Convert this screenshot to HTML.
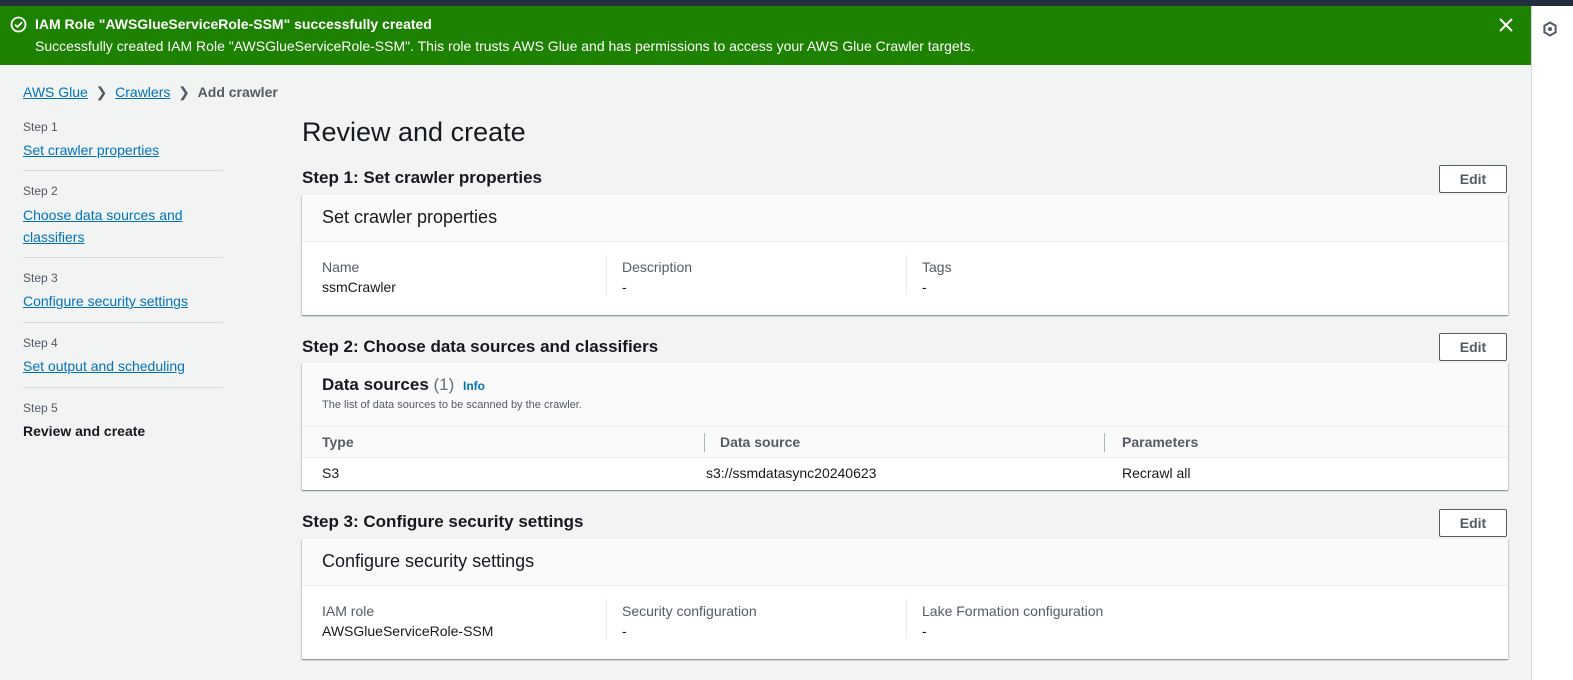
<!DOCTYPE html>
<html><head><meta charset="utf-8"><style>
*{box-sizing:border-box;margin:0;padding:0}
body{width:1573px;height:680px;overflow:hidden;font-family:"Liberation Sans",sans-serif;background:#f2f3f3;color:#16191f;position:relative;font-size:14px}
.top{position:absolute;left:0;top:0;width:1573px;height:6px;background:#232f3e}
.right{position:absolute;left:1531px;top:6px;width:42px;height:674px;background:#fff;border-left:1px solid #d5dbdb}
.banner{position:absolute;left:0;top:6px;width:1531px;height:59px;background:#1d8102;color:#fff}
.banner .t{position:absolute;left:35px;top:10px;font-weight:bold;font-size:14px}
.banner .d{position:absolute;left:35px;top:32px;font-size:14px}
.a{color:#0073bb;text-decoration:underline}
.abs{position:absolute}
.crumb{left:23px;top:84px;font-size:14px;color:#545b64}
.nav{left:23px;width:200px}
.nav .s{font-size:12px;color:#545b64}
.nav .l{font-size:14px;margin-top:6px;line-height:21px}
.sep{position:absolute;left:23px;width:200px;border-top:1px solid #d5dbdb}
h1{position:absolute;left:302px;top:117px;font-size:27px;font-weight:normal}
h2{position:absolute;left:302px;font-size:17px;font-weight:bold}
.edit{position:absolute;left:1439px;width:68px;height:28px;border:1px solid #545b64;border-radius:2px;background:#fff;font-weight:bold;color:#545b64;text-align:center;line-height:26px;font-size:14px}
.card{position:absolute;left:302px;width:1206px;background:#fff;box-shadow:0 1px 1px rgba(0,28,36,.3),1px 1px 1px rgba(0,28,36,.15),-1px 1px 1px rgba(0,28,36,.15)}
.hd{background:#fafafa;border-bottom:1px solid #eaeded;height:47px;padding:12px 20px;font-size:18px}
.col{position:absolute;top:0;font-size:14px}
.col .k{color:#545b64}
.vl{position:absolute;width:1px;background:#eaeded}
</style></head><body>
<div class="top"></div>
<div class="banner">
<svg class="abs" style="left:10px;top:10px" width="17" height="17" viewBox="0 0 17 17"><circle cx="8.5" cy="8.5" r="7" fill="none" stroke="#fff" stroke-width="1.8"/><path d="M5 8.7l2.4 2.3 4.6-4.7" fill="none" stroke="#fff" stroke-width="1.8"/></svg>
<div class="t">IAM Role "AWSGlueServiceRole-SSM" successfully created</div>
<div class="d">Successfully created IAM Role "AWSGlueServiceRole-SSM". This role trusts AWS Glue and has permissions to access your AWS Glue Crawler targets.</div>
<svg class="abs" style="left:1498px;top:11px" width="16" height="16" viewBox="0 0 16 16"><path d="M2 2l12 12M14 2L2 14" stroke="#fff" stroke-width="2"/></svg>
</div>
<div class="right"><svg class="abs" style="left:10px;top:15px" width="16" height="16" viewBox="0 0 16 16"><path d="M8 1.5l5.6 3.2v6.6L8 14.5 2.4 11.3V4.7z" fill="none" stroke="#545b64" stroke-width="2"/><circle cx="8" cy="8" r="2" fill="#545b64"/></svg></div>

<div class="abs crumb"><span class="a">AWS Glue</span> &nbsp;<b style="font-weight:normal">&#x276F;</b>&nbsp; <span class="a">Crawlers</span> &nbsp;&#x276F;&nbsp; <b>Add crawler</b></div>

<div class="abs nav" style="top:120px"><div class="s">Step 1</div><div class="l a">Set crawler properties</div></div>
<div class="sep" style="top:170px"></div>
<div class="abs nav" style="top:184px"><div class="s">Step 2</div><div class="l a" style="line-height:22px">Choose data sources and<br>classifiers</div></div>
<div class="sep" style="top:257px"></div>
<div class="abs nav" style="top:271px"><div class="s">Step 3</div><div class="l a">Configure security settings</div></div>
<div class="sep" style="top:322px"></div>
<div class="abs nav" style="top:336px"><div class="s">Step 4</div><div class="l a">Set output and scheduling</div></div>
<div class="sep" style="top:387px"></div>
<div class="abs nav" style="top:401px"><div class="s">Step 5</div><div class="l" style="font-weight:bold">Review and create</div></div>

<h1>Review and create</h1>

<h2 style="top:168px">Step 1: Set crawler properties</h2>
<div class="edit" style="top:165px">Edit</div>
<div class="card" style="top:195px;height:120px">
<div class="hd">Set crawler properties</div>
<div class="col" style="left:20px;top:64px"><div class="k">Name</div><div style="margin-top:4px">ssmCrawler</div></div>
<div class="vl" style="left:304px;top:60px;height:40px"></div>
<div class="col" style="left:320px;top:64px"><div class="k">Description</div><div style="margin-top:4px">-</div></div>
<div class="vl" style="left:604px;top:60px;height:40px"></div>
<div class="col" style="left:620px;top:64px"><div class="k">Tags</div><div style="margin-top:4px">-</div></div>
</div>

<h2 style="top:337px">Step 2: Choose data sources and classifiers</h2>
<div class="edit" style="top:333px">Edit</div>
<div class="card" style="top:363px;height:127px">
<div style="background:#fafafa;height:64px;border-bottom:1px solid #eaeded;padding:12px 20px">
<div style="font-size:17px;font-weight:bold">Data sources <span style="font-weight:normal;color:#687078">(1)</span> <span style="font-size:12px;color:#0073bb;margin-left:4px">Info</span></div>
<div style="font-size:11px;color:#545b64;margin-top:4px">The list of data sources to be scanned by the crawler.</div></div>
<div style="height:31px;border-bottom:1px solid #eaeded;position:relative;background:#fafafa;font-weight:bold;color:#545b64">
<div class="col" style="left:20px;top:7px">Type</div>
<div class="vl" style="left:402px;top:6px;height:19px;background:#aab7b8"></div>
<div class="col" style="left:418px;top:7px">Data source</div>
<div class="vl" style="left:802px;top:6px;height:19px;background:#aab7b8"></div>
<div class="col" style="left:820px;top:7px">Parameters</div></div>
<div style="position:relative">
<div class="col" style="left:20px;top:7px">S3</div>
<div class="col" style="left:404px;top:7px">s3://ssmdatasync20240623</div>
<div class="col" style="left:820px;top:7px">Recrawl all</div></div>
</div>

<h2 style="top:512px">Step 3: Configure security settings</h2>
<div class="edit" style="top:509px">Edit</div>
<div class="card" style="top:539px;height:120px">
<div class="hd">Configure security settings</div>
<div class="col" style="left:20px;top:64px"><div class="k">IAM role</div><div style="margin-top:4px">AWSGlueServiceRole-SSM</div></div>
<div class="vl" style="left:304px;top:60px;height:40px"></div>
<div class="col" style="left:320px;top:64px"><div class="k">Security configuration</div><div style="margin-top:4px">-</div></div>
<div class="vl" style="left:604px;top:60px;height:40px"></div>
<div class="col" style="left:620px;top:64px"><div class="k">Lake Formation configuration</div><div style="margin-top:4px">-</div></div>
</div>
</body></html>
